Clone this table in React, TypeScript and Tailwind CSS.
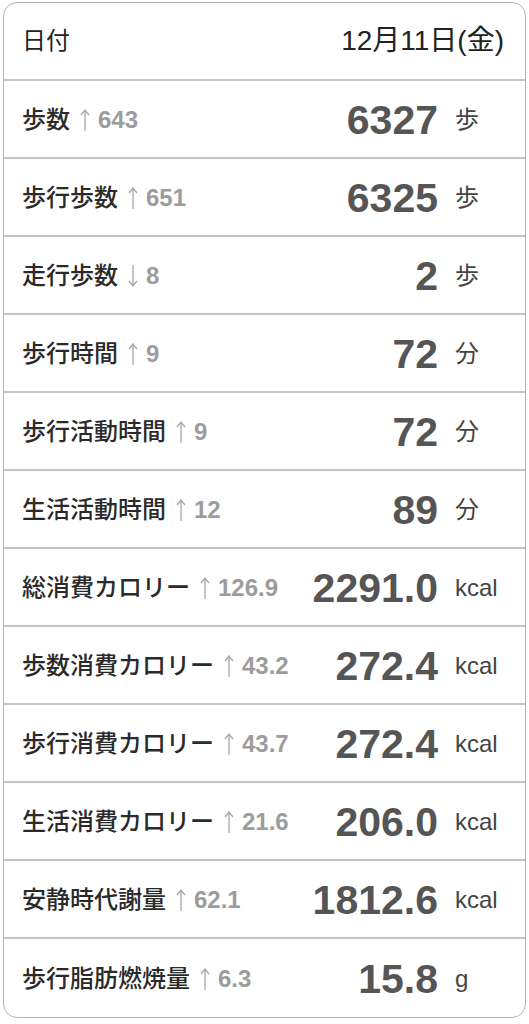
const rows = [
  { label: '歩数', dir: 'up', delta: '643', value: '6327', unit: '歩' },
  { label: '歩行歩数', dir: 'up', delta: '651', value: '6325', unit: '歩' },
  { label: '走行歩数', dir: 'down', delta: '8', value: '2', unit: '歩' },
  { label: '歩行時間', dir: 'up', delta: '9', value: '72', unit: '分' },
  { label: '歩行活動時間', dir: 'up', delta: '9', value: '72', unit: '分' },
  { label: '生活活動時間', dir: 'up', delta: '12', value: '89', unit: '分' },
  { label: '総消費カロリー', dir: 'up', delta: '126.9', value: '2291.0', unit: 'kcal' },
  { label: '歩数消費カロリー', dir: 'up', delta: '43.2', value: '272.4', unit: 'kcal' },
  { label: '歩行消費カロリー', dir: 'up', delta: '43.7', value: '272.4', unit: 'kcal' },
  { label: '生活消費カロリー', dir: 'up', delta: '21.6', value: '206.0', unit: 'kcal' },
  { label: '安静時代謝量', dir: 'up', delta: '62.1', value: '1812.6', unit: 'kcal' },
  { label: '歩行脂肪燃焼量', dir: 'up', delta: '6.3', value: '15.8', unit: 'g' },
];

const font = "font-['Liberation_Sans','Noto_Sans_CJK_JP',sans-serif]";

function Arrow({ dir }: { dir: string }) {
  return (
    <svg
      width="10"
      height="24"
      viewBox="0 0 10 24"
      className={`text-[#a8a8a8] ${dir === 'down' ? 'rotate-180' : ''}`}
      fill="none"
      stroke="currentColor"
      strokeWidth="1.3"
    >
      <path d="M5 2 V23 M1 7 L5 2 L9 7" />
    </svg>
  );
}

export default function App() {
  return (
    <div className={`w-[529px] h-[1024px] bg-white pt-[2px] px-[3px] ${font}`}>
      <div className="border border-[#b3b3b3] rounded-[14px] overflow-hidden">
        <div className="h-[78px] flex items-center justify-between pl-[18px] pr-[21px] border-b-2 border-[#c4c4c4]">
          <span className="text-[24px] text-[#222]">日付</span>
          <span className="text-[28px] text-[#222]">12月11日(金)</span>
        </div>
        {rows.map((r, i) => (
          <div
            key={r.label}
            className={`h-[78px] flex items-center pl-[18px] pt-[2px] ${
              i < rows.length - 1 ? 'border-b-2 border-[#c4c4c4]' : ''
            }`}
          >
            <div className="flex-1 flex items-center min-w-0 whitespace-nowrap">
              <span className="text-[24px] font-medium text-[#2a2a2a]">{r.label}</span>
              <span className="ml-[10px] mr-[8px]">
                <Arrow dir={r.dir} />
              </span>
              <span className="text-[24px] font-bold text-[#9c9c9c]">{r.delta}</span>
            </div>
            <span className="text-[41px] font-bold text-[#555] leading-none">{r.value}</span>
            <span className="w-[70px] ml-[17px] text-[24px] text-[#444]">{r.unit}</span>
          </div>
        ))}
      </div>
    </div>
  );
}
